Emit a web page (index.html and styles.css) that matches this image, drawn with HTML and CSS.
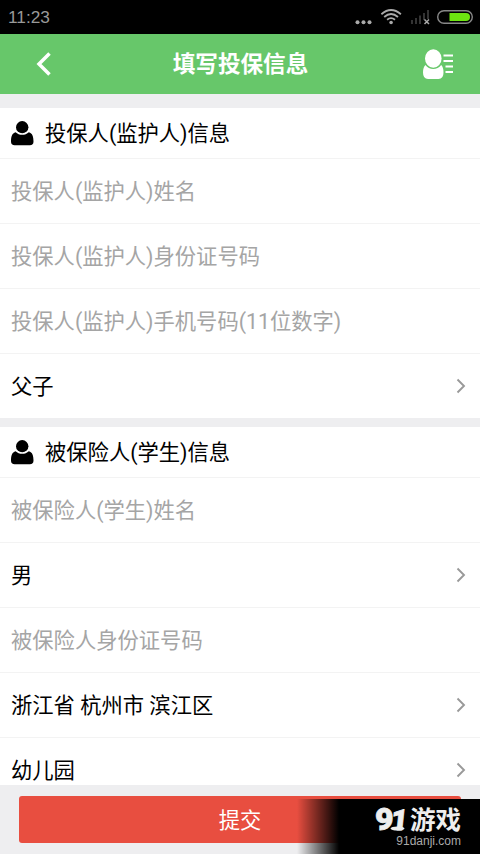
FILE: index.html
```html
<!DOCTYPE html>
<html lang="zh-CN">
<head>
<meta charset="utf-8">
<title>填写投保信息</title>
<link rel="stylesheet" href="styles.css">
</head>
<body>
<svg class="defs" width="0" height="0">
  <symbol id="person" viewBox="0 0 23 25"><ellipse cx="11.2" cy="6.2" rx="6.2" ry="6.100"/><path d="M4.600 11.200C8 14.600 14.400 14.600 17.800 11.200C21.500 12 22.500 16 22.500 20.500Q22.500 24.300 18.800 24.300H3.700Q0 24.300 0 20.500C0 16 1 12 4.600 11.200Z"/></symbol>
  <symbol id="chevron" viewBox="0 0 10 16"><path d="M1.500 1.500L8 8L1.500 14.500" fill="none" stroke="#999" stroke-width="1.900"/></symbol>
</svg>
<div class="screen">
  <div class="status">
    <span class="time">11:23</span>
    <svg class="status-icons" width="125" height="34" viewBox="0 0 125 34">
      <g fill="#aaa"><circle cx="2.500" cy="22.300" r="2"/><circle cx="8.500" cy="22.300" r="2"/><circle cx="14.500" cy="22.300" r="2"/><circle cx="36.100" cy="22.500" r="1.800"/></g>
      <g fill="none" stroke="#aaa" stroke-width="1.800"><path d="M26.400 14.200Q36 5.800 45.900 14.200M29.200 17Q36 11 43 17M32.100 19.800Q36 16.400 40 19.800"/></g>
      <g fill="#333"><path d="M56 20h2v4h-2zM60 18h2v6h-2zM64 15.500h2v8.500h-2zM68 13h2v7h-2zM72 10h2v9h-2z"/></g>
      <path d="M69.500 19.500l4.500 4.500M74 19.500L69.500 24" stroke="#aaa" stroke-width="1.500"/>
      <rect x="82.700" y="10.700" width="34.600" height="12.600" rx="6.300" fill="none" stroke="#888" stroke-width="1.400"/>
      <path d="M94.500 13h16.500a4 4 0 0 1 0 8H94.500z" fill="#6de510"/>
    </svg>
  </div>
  <header class="header">
    <svg class="back" width="18" height="26" viewBox="0 0 18 26"><path d="M15.500 2.500L5 13L15.500 23.500" fill="none" stroke="#fff" stroke-width="3.500"/></svg>
    <h1>填写投保信息</h1>
    <svg class="contacts" width="31" height="31" viewBox="0 0 31 31"><g fill="#fff"><ellipse cx="10.300" cy="9.500" rx="8.300" ry="9.300"/><path d="M2.500 16C6 21.300 14.500 21.300 18.200 16Q20.500 18 20.500 23.500Q20.500 30 15.500 30H5Q0 30 0 23.500Q0 18 2.500 16Z"/></g><path d="M20.500 6.500h9.500M20.500 12h9.500M22.500 17.500h7.500M22.500 23h7.500" stroke="#fff" stroke-width="2"/></svg>
  </header>
  <main class="form">
    <section class="group">
      <h2><svg class="person"><use href="#person"/></svg><span class="label">投保人(监护人)信息</span></h2>
      <div class="row hint"><span class="label">投保人(监护人)姓名</span></div>
      <div class="row hint"><span class="label">投保人(监护人)身份证号码</span></div>
      <div class="row hint"><span class="label">投保人(监护人)手机号码(11位数字)</span></div>
      <div class="row"><span class="label">父子</span><svg class="chevron"><use href="#chevron"/></svg></div>
    </section>
    <section class="group">
      <h2><svg class="person"><use href="#person"/></svg><span class="label">被保险人(学生)信息</span></h2>
      <div class="row hint"><span class="label">被保险人(学生)姓名</span></div>
      <div class="row"><span class="label">男</span><svg class="chevron"><use href="#chevron"/></svg></div>
      <div class="row hint"><span class="label">被保险人身份证号码</span></div>
      <div class="row"><span class="label">浙江省 杭州市 滨江区</span><svg class="chevron"><use href="#chevron"/></svg></div>
      <div class="row"><span class="label">幼儿园</span><svg class="chevron"><use href="#chevron"/></svg></div>
    </section>
  </main>
  <footer class="footer"><button class="submit">提交</button></footer>
  <div class="watermark">
    <div class="brand"><span class="digits">9<span class="one">1</span></span><svg class="swoosh" width="15" height="5" viewBox="0 0 15 5"><ellipse cx="7.500" cy="2.500" rx="7" ry="2" fill="#eee"/></svg><span class="game">游戏</span></div>
    <div class="site">91danji.com</div>
  </div>
</div>
</body>
</html>
```
FILE: styles.css
```css
* { box-sizing: border-box; }
body { margin: 0; }
.defs { position: absolute; }
.screen {
  position: relative;
  display: flex;
  flex-direction: column;
  width: 480px;
  height: 854px;
  overflow: hidden;
  background: #eeeef0;
  color: #000;
  font-family: Roboto, "Noto Sans CJK SC", sans-serif;
  font-size: 21.3px;
}
.status {
  flex: none;
  display: flex;
  justify-content: space-between;
  height: 34px;
  padding-left: 8px;
  background: #000;
}
.time { color: #999; font-family: "Liberation Sans", sans-serif; font-size: 17.3px; line-height: 35px; }
.header {
  flex: none;
  display: flex;
  align-items: center;
  justify-content: space-between;
  height: 60px;
  padding: 0 26px 0 34px;
  background: #67c76a;
  color: #fff;
}
.header h1 { margin: 0 0 0 6px; padding-top: 2px; font-size: 22.6px; font-weight: 700; line-height: 58px; }
.form { flex: none; height: 691px; padding-top: 14px; overflow: hidden; }
.group { margin-bottom: 9px; background: #fff; }
.group h2 {
  display: flex;
  align-items: center;
  gap: 11px;
  height: 50px;
  margin: 0;
  padding: 0 0 0 11px;
  font-size: 21.3px;
  font-weight: 400;
}
.label { padding-bottom: 4px; }
h2 .label { padding-bottom: 3px; }
.person { width: 23px; height: 25px; }
.row {
  display: flex;
  align-items: center;
  justify-content: space-between;
  height: 65px;
  padding: 0 14px 0 11px;
  border-top: 1px solid #f3f3f3;
}
.hint { color: #a5a5a5; }
.chevron { width: 10px; height: 16px; }
.footer { flex: 1; padding: 11px 19px; }
.submit {
  display: block;
  width: 100%;
  height: 47px;
  padding: 0 0 2px;
  border: 0;
  border-radius: 3px;
  background: #e84e40;
  color: #fff;
  font: inherit;
}
.watermark {
  position: absolute;
  right: 0;
  bottom: 0;
  width: 183px;
  height: 55px;
  padding: 6px 19px 0 0;
  background: linear-gradient(to right, rgba(0,0,0,0), #000 42px);
  color: #eee;
  text-align: right;
}
.brand {
  position: relative;
  display: flex;
  justify-content: flex-end;
  height: 27px;
  font-weight: 900;
  line-height: 29px;
}
.digits { width: 35px; font-size: 32px; text-align: left; white-space: nowrap; -webkit-text-stroke: 0.8px #eee; }
.one { display: inline-block; margin-left: -3px; font-size: 29px; transform: skewX(-6deg); }
.swoosh { position: absolute; right: 56px; bottom: 1px; }
.game { font-size: 25.5px; font-weight: 700; line-height: 30px; }
.site { margin-top: 2px; color: #aaa; font: 12px/15px "Liberation Sans", sans-serif; }
```
